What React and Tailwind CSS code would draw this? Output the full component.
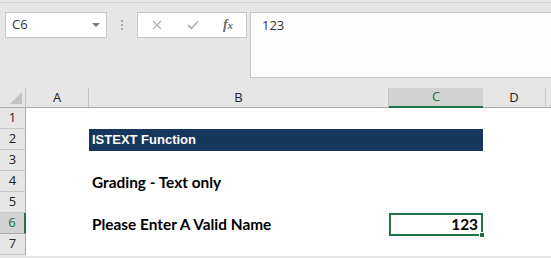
export default function App() {
  const rows = [1, 2, 3, 4, 5, 6, 7];
  const ui = { fontFamily: '"Open Sans", "Liberation Sans", sans-serif' };
  const cal = { fontFamily: 'Lato, "Liberation Sans", sans-serif' };
  const arial = { fontFamily: '"Liberation Sans", Arial, sans-serif' };
  return (
    <div className="w-[551px] h-[258px] bg-[#e6e6e6] overflow-hidden relative" style={ui}>
      {/* formula bar area */}
      <div className="h-[2px]" />
      <div className="border-t border-[#d4d4d4] h-[10px]" />
      <div className="flex items-start h-[66px]">
        <div className="ml-[5px] w-[102px] h-[26px] bg-white border border-[#c6c6c6] flex items-center justify-between pl-[6px] pr-[6px] text-[13px] text-[#333]">
          <span>C6</span>
          <svg width="8" height="5" viewBox="0 0 8 5"><path d="M0 0 L8 0 L4 4 Z" fill="#7a7a7a" /></svg>
        </div>
        <div className="w-[30px] h-[26px] flex flex-col items-center justify-center gap-[2px]">
          <div className="w-[2px] h-[2px] bg-[#a8a8a8]" />
          <div className="w-[2px] h-[2px] bg-[#a8a8a8]" />
          <div className="w-[2px] h-[2px] bg-[#a8a8a8]" />
        </div>
        <div className="w-[110px] h-[26px] bg-white border border-[#c6c6c6] flex items-center">
          <div className="w-[38px] flex justify-center">
            <svg width="10" height="10" viewBox="0 0 10 10"><path d="M1 1 L9 9 M9 1 L1 9" stroke="#b4b4b4" strokeWidth="1.3" /></svg>
          </div>
          <div className="w-[34px] flex justify-center">
            <svg width="12" height="10" viewBox="0 0 12 10"><path d="M1 5 L4.5 8.5 L11 1.5" stroke="#b4b4b4" strokeWidth="1.8" fill="none" /></svg>
          </div>
          <div className="flex-1 flex items-baseline justify-center italic font-bold text-[#6b6b6b] leading-none" style={{ fontFamily: '"Liberation Serif", serif' }}>
            <span className="text-[14px]">f</span><span className="text-[11px]">x</span>
          </div>
        </div>
        <div className="ml-[3px] flex-1 h-[66px] bg-[#fdfdfd] border border-r-0 border-[#c6c6c6] pl-[11px] pt-[3px] text-[13px] text-[#333]">
          123
        </div>
      </div>
      <div className="h-[10px]" />
      {/* column headers */}
      <div className="flex h-[20px] border-b border-[#ababab] text-[13px] text-[#222]">
        <div className="w-[26px] border-r border-[#c6c6c6] relative">
          <svg className="absolute right-[3px] bottom-[3px]" width="12" height="12" viewBox="0 0 12 12"><path d="M12 0 L12 12 L0 12 Z" fill="#c4c4c4" /></svg>
        </div>
        <div className="w-[63px] border-r border-[#c6c6c6] flex items-center justify-center">A</div>
        <div className="w-[300px] border-r border-[#c6c6c6] flex items-center justify-center">B</div>
        <div className="w-[94px] bg-[#d2d2d2] border-b-2 border-[#217346] -mb-[1px] flex items-center justify-center text-[#217346]">C</div>
        <div className="w-[63px] border-r border-[#c6c6c6] flex items-center justify-center">D</div>
        <div className="flex-1" />
      </div>
      {/* rows */}
      <div className="flex">
        <div className="w-[26px] flex flex-col text-[13px] text-[#222]">
          {rows.map((r) => (
            <div
              key={r}
              className={
                r === 6
                  ? "h-[21px] bg-[#d2d2d2] border-b border-[#ababab] border-r-2 border-r-[#217346] flex items-center justify-center text-[#217346]"
                  : "h-[21px] border-b border-[#c6c6c6] border-r border-r-[#ababab] flex items-center justify-center"
              }
            >
              {r}
            </div>
          ))}
        </div>
        <div className="flex-1 bg-white flex flex-col">
          <div className="h-[21px]" />
          <div className="h-[21px] flex">
            <div className="w-[63px]" />
            <div className="w-[394px] h-[22px] bg-[#17365d] text-white font-bold text-[13px] flex items-center pl-[3px]" style={arial}>
              ISTEXT Function
            </div>
          </div>
          <div className="h-[21px]" />
          <div className="h-[21px] flex items-center pt-[3px]">
            <div className="w-[63px]" />
            <div className="pl-[3px] font-bold text-[15.4px] text-black" style={cal}>Grading - Text only</div>
          </div>
          <div className="h-[21px]" />
          <div className="h-[22px] flex items-center">
            <div className="w-[63px]" />
            <div className="w-[300px] pl-[3px] pt-[1px] font-bold text-[15.4px] text-black" style={cal}>Please Enter A Valid Name</div>
            <div className="w-[94px] h-[23px] border-2 border-[#217346] relative flex items-center justify-end pr-[3px] pt-[1px] font-bold text-[15.4px] text-black" style={cal}>
              123
              <div className="absolute -right-[4px] -bottom-[4px] w-[6px] h-[6px] bg-[#217346] border border-white" />
            </div>
          </div>
          <div className="h-[21px]" />
        </div>
      </div>
    </div>
  );
}
